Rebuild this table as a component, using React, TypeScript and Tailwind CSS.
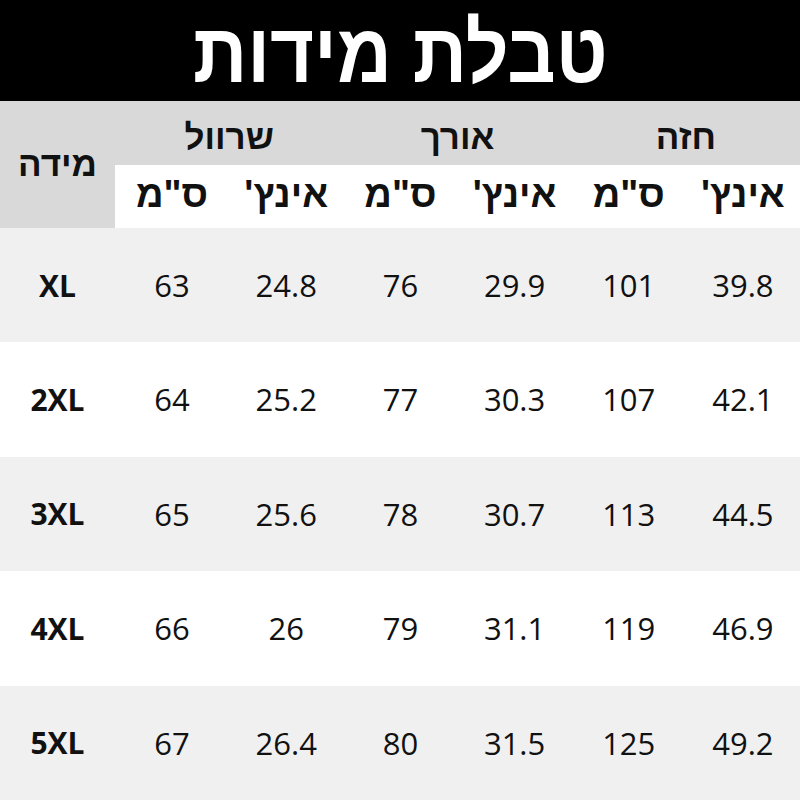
import React from "react";

/* ── Data ── */
const groups = ["שרוול", "אורך", "חזה"];
const units = ['ס"מ', "אינץ'", 'ס"מ', "אינץ'", 'ס"מ', "אינץ'"];

const rows = [
  { size: "XL", values: ["63", "24.8", "76", "29.9", "101", "39.8"] },
  { size: "2XL", values: ["64", "25.2", "77", "30.3", "107", "42.1"] },
  { size: "3XL", values: ["65", "25.6", "78", "30.7", "113", "44.5"] },
  { size: "4XL", values: ["66", "26", "79", "31.1", "119", "46.9"] },
  { size: "5XL", values: ["67", "26.4", "80", "31.5", "125", "49.2"] },
];

const heb = "font-['Liberation_Sans',Arial,sans-serif] font-bold";
const num = "font-['Open_Sans','Liberation_Sans',sans-serif]";

export default function App() {
  return (
    <div className="w-[800px] h-[800px] flex flex-col bg-white text-[#111] overflow-hidden">
      {/* ── Title ── */}
      <div className="h-[101px] bg-black flex items-center justify-center">
        <span
          dir="rtl"
          className={`${heb} inline-block text-white text-[84px] leading-none pt-1 scale-x-[0.9]`}
        >
          טבלת מידות
        </span>
      </div>

      {/* ── Header ── */}
      <div className="h-[127px] grid grid-cols-[115px_repeat(6,1fr)] grid-rows-[64px_63px] bg-[#d9d9d9]">
        <div className="row-span-2 flex items-center justify-center">
          <span dir="rtl" className={`${heb} text-[35px]`}>מידה</span>
        </div>
        {groups.map((g) => (
          <div key={g} className="col-span-2 flex items-center justify-center pt-2">
            <span dir="rtl" className={`${heb} text-[35px]`}>{g}</span>
          </div>
        ))}
        {units.map((u, i) => (
          <div key={i} className="bg-white flex items-center justify-center pb-1">
            <span dir="rtl" className={`${heb} text-[38px]`}>{u}</span>
          </div>
        ))}
      </div>

      {/* ── Body ── */}
      <div className="flex-1 grid grid-rows-5">
        {rows.map((r, i) => (
          <div
            key={r.size}
            className={`grid grid-cols-[115px_repeat(6,1fr)] ${i % 2 === 0 ? "bg-[#f0f0f0]" : "bg-white"}`}
          >
            <div className={`${num} font-bold text-[30px] flex items-center justify-center`}>
              {r.size}
            </div>
            {r.values.map((v, j) => (
              <div key={j} className={`${num} text-[31px] flex items-center justify-center`}>
                {v}
              </div>
            ))}
          </div>
        ))}
      </div>
    </div>
  );
}
